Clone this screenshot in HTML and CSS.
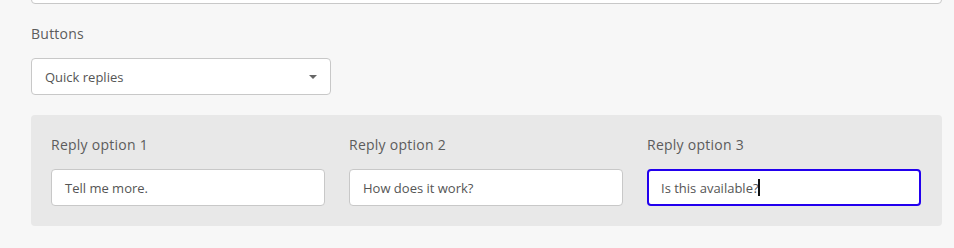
FILE: index.html
```html
<!DOCTYPE html>
<html>
<head>
<meta charset="utf-8">
<link rel="stylesheet" href="styles.css">
</head>
<body>
<div class="page">
  <div class="top-field"></div>
  <div class="field-label">Buttons</div>
  <div class="select">
    <span class="select-text">Quick replies</span>
    <span class="caret"></span>
  </div>
  <div class="panel">
    <div class="col">
      <div class="field-label">Reply option 1</div>
      <div class="input">Tell me more.</div>
    </div>
    <div class="col">
      <div class="field-label">Reply option 2</div>
      <div class="input">How does it work?</div>
    </div>
    <div class="col">
      <div class="field-label">Reply option 3</div>
      <div class="input focused">Is this available?<span class="cursor"></span></div>
    </div>
  </div>
</div>
</body>
</html>
```
FILE: styles.css
```css
html, body {
  margin: 0;
  padding: 0;
  background: #f7f7f7;
}
body {
  font-family: "Open Sans", "Noto Sans", sans-serif;
  color: #5a5a5a;
}
.page {
  padding: 0 12px 0 31px;
  display: flex;
  flex-direction: column;
}
.top-field {
  height: 36px;
  margin-top: -34px;
  background: #fff;
  border: 1px solid #c8c8c8;
  border-radius: 4px;
  margin-bottom: 20px;
}
.field-label {
  font-size: 14px;
  line-height: 20px;
  letter-spacing: 0.25px;
  margin-bottom: 14px;
  color: #5c5c5c;
}
.select {
  height: 35px;
  border: 1px solid #c8c8c8;
  border-radius: 4px;
  background: #fff;
  display: flex;
  align-items: center;
  justify-content: space-between;
  padding: 0 13px;
  width: 272px;
  margin-bottom: 20px;
}
.select-text {
  font-size: 13px;
  color: #555;
}
.caret {
  width: 0;
  height: 0;
  border-left: 4.5px solid transparent;
  border-right: 4.5px solid transparent;
  border-top: 4.5px solid #666;
  margin-top: 1px;
}
.panel {
  background: #e8e8e8;
  border-radius: 4px;
  padding: 20px 21px 20px 20px;
  display: grid;
  grid-template-columns: repeat(3, 1fr);
  column-gap: 24px;
}
.col {
  display: flex;
  flex-direction: column;
}
.input {
  height: 35px;
  border: 1px solid #c8c8c8;
  border-radius: 4px;
  background: #fff;
  display: flex;
  align-items: center;
  padding: 0 13px;
  font-size: 13px;
  color: #555;
}
.input.focused {
  border: 2px solid #2200ee;
  height: 33px;
  padding: 0 12px;
}
.cursor {
  display: inline-block;
  width: 2px;
  height: 17px;
  background: #111;
  margin-left: -1px;
}
```
